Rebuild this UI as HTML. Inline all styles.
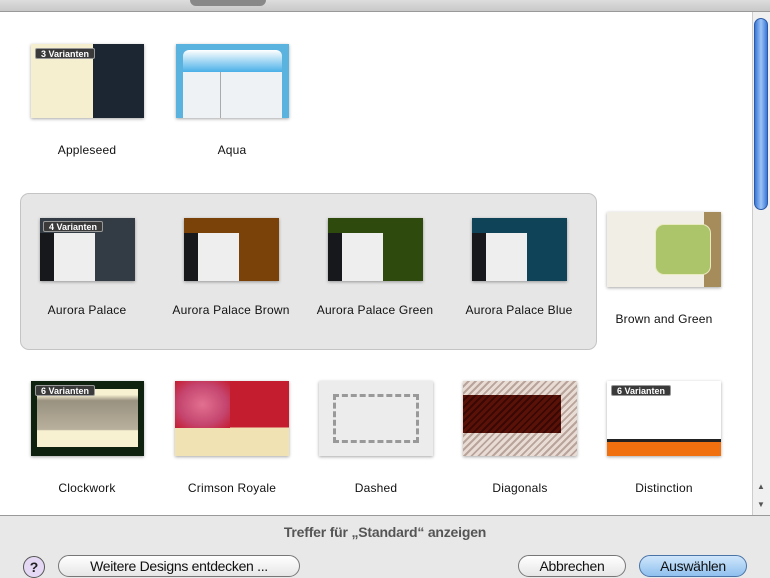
<!DOCTYPE html>
<html><head><meta charset="utf-8"><style>
*{margin:0;padding:0;box-sizing:border-box}
body{width:770px;height:578px;overflow:hidden;background:#fff;font-family:"Liberation Sans",Arial,sans-serif;position:relative}
.a{position:absolute}
.t{position:absolute;box-shadow:0 1px 3px rgba(0,0,0,.35)}
.l{position:absolute;font-size:12px;color:#111;text-align:center;width:150px;letter-spacing:0.2px}
.badge{position:absolute;left:4px;top:4px;background:#3a3a3a;color:#fff;font-size:9px;font-weight:bold;padding:0 5px;height:11px;line-height:11px;border:1px solid #999;border-radius:2px}
.btn{position:absolute;height:22px;border:1px solid #777;border-radius:11px;background:linear-gradient(#fff,#e6e6e6);font-size:14px;line-height:20px;text-align:center;color:#111;letter-spacing:-0.3px}
</style></head><body>
<div class="a" style="left:0;top:0;width:770px;height:12px;background:linear-gradient(#ddd,#c8c8c8);border-bottom:1px solid #999"></div>
<div class="a" style="left:190px;top:-6px;width:76px;height:12px;border-radius:6px;background:#888"></div>
<div class="a" style="left:752px;top:12px;width:18px;height:503px;background:#f0f0f0;border-left:1px solid #ccc"></div>
<div class="a" style="left:754px;top:18px;width:14px;height:192px;border-radius:7px;background:linear-gradient(90deg,#3b78d8,#9cc4f5,#3b78d8);border:1px solid #2a5aa8"></div>
<div class="a" style="left:757px;top:482px;font-size:8px;color:#555">▲</div>
<div class="a" style="left:757px;top:500px;font-size:8px;color:#555">▼</div>
<div class="t" style="left:31px;top:44px;width:113px;height:74px;background:linear-gradient(90deg,#f5efd0 55%,#1c2633 55%)"><div class="badge">3 Varianten</div></div>
<div class="l" style="left:12px;top:143px">Appleseed</div>
<div class="t" style="left:176px;top:44px;width:113px;height:74px;background:#5ab2de"><div class="a" style="left:7px;top:6px;width:99px;height:22px;border-radius:6px 6px 0 0;background:linear-gradient(#fff,#4ab0e8)"></div><div class="a" style="left:7px;top:28px;width:99px;height:46px;background:#eef2f5"></div><div class="a" style="left:44px;top:28px;width:1px;height:46px;background:#aaa"></div></div>
<div class="l" style="left:157px;top:143px">Aqua</div>
<div class="a" style="left:20px;top:193px;width:577px;height:157px;background:#e6e6e6;border:1px solid #c4c4c4;border-radius:9px"></div>
<div class="t" style="left:40px;top:218px;width:95px;height:63px;background:#333b44"><div class="a" style="left:0;top:15px;width:14px;height:48px;background:#16181c"></div><div class="a" style="left:14px;top:15px;width:41px;height:48px;background:#eee"></div><div class="badge" style="left:3px;top:3px">4 Varianten</div></div>
<div class="l" style="left:12px;top:303px">Aurora Palace</div>
<div class="t" style="left:184px;top:218px;width:95px;height:63px;background:#7a4208"><div class="a" style="left:0;top:15px;width:14px;height:48px;background:#16181c"></div><div class="a" style="left:14px;top:15px;width:41px;height:48px;background:#eee"></div></div>
<div class="l" style="left:156px;top:303px">Aurora Palace Brown</div>
<div class="t" style="left:328px;top:218px;width:95px;height:63px;background:#2f4a0d"><div class="a" style="left:0;top:15px;width:14px;height:48px;background:#16181c"></div><div class="a" style="left:14px;top:15px;width:41px;height:48px;background:#eee"></div></div>
<div class="l" style="left:300px;top:303px">Aurora Palace Green</div>
<div class="t" style="left:472px;top:218px;width:95px;height:63px;background:#0f4458"><div class="a" style="left:0;top:15px;width:14px;height:48px;background:#16181c"></div><div class="a" style="left:14px;top:15px;width:41px;height:48px;background:#eee"></div></div>
<div class="l" style="left:444px;top:303px">Aurora Palace Blue</div>
<div class="t" style="left:607px;top:212px;width:114px;height:75px;background:#f1eee6"><div class="a" style="left:97px;top:0;width:17px;height:75px;background:#a68b5b"></div><div class="a" style="left:48px;top:12px;width:56px;height:51px;border-radius:9px;background:#acc46a;border:1px solid #e8eac0"></div></div>
<div class="l" style="left:589px;top:312px">Brown and Green</div>
<div class="t" style="left:31px;top:381px;width:113px;height:75px;background:#0f2210"><div class="a" style="left:6px;top:8px;width:101px;height:58px;background:linear-gradient(#f7f1d2 10%,#9a9280 20%,#b8b09c 70%,#f7f1d2 72%)"></div><div class="badge">6 Varianten</div></div>
<div class="l" style="left:12px;top:481px">Clockwork</div>
<div class="t" style="left:175px;top:381px;width:114px;height:75px;background:linear-gradient(#c51d30 62%,#f1e2b4 62%)"><div class="a" style="left:0;top:0;width:55px;height:47px;background:radial-gradient(#e27090,#c54670 60%,#c51d30)"></div></div>
<div class="l" style="left:157px;top:481px">Crimson Royale</div>
<div class="t" style="left:319px;top:381px;width:114px;height:75px;background:#ececec"><div class="a" style="left:14px;top:13px;width:86px;height:49px;border:3px dashed #999"></div></div>
<div class="l" style="left:301px;top:481px">Dashed</div>
<div class="t" style="left:463px;top:381px;width:114px;height:75px;background:repeating-linear-gradient(135deg,#e8dcd4 0 3px,#b8a49a 3px 5px)"><div class="a" style="left:0;top:14px;width:98px;height:38px;background:repeating-linear-gradient(135deg,#5a1208 0 3px,#3a0804 3px 5px)"></div></div>
<div class="l" style="left:445px;top:481px">Diagonals</div>
<div class="t" style="left:607px;top:381px;width:114px;height:75px;background:#fff"><div class="a" style="left:0;top:58px;width:114px;height:3px;background:#222"></div><div class="a" style="left:0;top:61px;width:114px;height:14px;background:#f07010"></div><div class="badge">6 Varianten</div></div>
<div class="l" style="left:589px;top:481px">Distinction</div>
<div class="a" style="left:0;top:515px;width:770px;height:63px;background:#e8e8e8;border-top:1px solid #999"></div>
<div class="a" style="left:0;top:524px;width:770px;text-align:center;font-size:14px;font-weight:bold;color:#555;letter-spacing:-0.2px">Treffer für „Standard“ anzeigen</div>
<div class="a" style="left:23px;top:556px;width:22px;height:22px;border-radius:50%;border:1px solid #555;background:#e4d8f4;text-align:center;font-size:14px;line-height:20px;font-weight:bold;color:#222">?</div>
<div class="btn" style="left:58px;top:555px;width:242px">Weitere Designs entdecken ...</div>
<div class="btn" style="left:518px;top:555px;width:108px">Abbrechen</div>
<div class="btn" style="left:639px;top:555px;width:108px;background:linear-gradient(#cfe6fb,#8fc0ee);border-color:#4a74a8">Auswählen</div>
</body></html>
